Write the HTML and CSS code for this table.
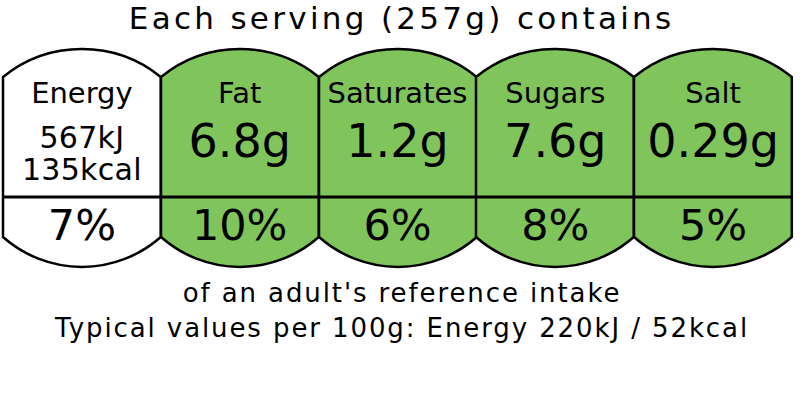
FILE: index.html
```html
<!DOCTYPE html>
<html lang="en">
<head>
<meta charset="utf-8">
<title>Nutrition label</title>
<link rel="stylesheet" href="styles.css">
</head>
<body>
<div class="label">
  <h1 class="title">Each serving (257g) contains</h1>
  <div class="row">
    <div class="cell energy">
      <svg class="shape" viewBox="0 0 157.8 224" preserveAspectRatio="none"><path class="outline" d="M0,30 A125.4,125.4 0 0 1 157.8,30 L157.8,190 A119,119 0 0 1 0,190 Z"/><path class="rule" d="M0,150 H157.8"/></svg>
      <div class="upper">
        <div class="name">Energy</div>
        <div class="sub first">567kJ</div>
        <div class="sub">135kcal</div>
      </div>
      <div class="lower">7%</div>
    </div>
    <div class="cell green">
      <svg class="shape" viewBox="0 0 157.8 224" preserveAspectRatio="none"><path class="outline" d="M0,30 A125.4,125.4 0 0 1 157.8,30 L157.8,190 A119,119 0 0 1 0,190 Z"/><path class="rule" d="M0,150 H157.8"/></svg>
      <div class="upper">
        <div class="name">Fat</div>
        <div class="value">6.8g</div>
      </div>
      <div class="lower">10%</div>
    </div>
    <div class="cell green">
      <svg class="shape" viewBox="0 0 157.8 224" preserveAspectRatio="none"><path class="outline" d="M0,30 A125.4,125.4 0 0 1 157.8,30 L157.8,190 A119,119 0 0 1 0,190 Z"/><path class="rule" d="M0,150 H157.8"/></svg>
      <div class="upper">
        <div class="name">Saturates</div>
        <div class="value">1.2g</div>
      </div>
      <div class="lower">6%</div>
    </div>
    <div class="cell green">
      <svg class="shape" viewBox="0 0 157.8 224" preserveAspectRatio="none"><path class="outline" d="M0,30 A125.4,125.4 0 0 1 157.8,30 L157.8,190 A119,119 0 0 1 0,190 Z"/><path class="rule" d="M0,150 H157.8"/></svg>
      <div class="upper">
        <div class="name">Sugars</div>
        <div class="value">7.6g</div>
      </div>
      <div class="lower">8%</div>
    </div>
    <div class="cell green">
      <svg class="shape" viewBox="0 0 157.8 224" preserveAspectRatio="none"><path class="outline" d="M0,30 A125.4,125.4 0 0 1 157.8,30 L157.8,190 A119,119 0 0 1 0,190 Z"/><path class="rule" d="M0,150 H157.8"/></svg>
      <div class="upper">
        <div class="name">Salt</div>
        <div class="value">0.29g</div>
      </div>
      <div class="lower">5%</div>
    </div>
  </div>
  <div class="note">
    <div class="line">of an adult's reference intake</div>
    <div class="line">Typical values per 100g: Energy 220kJ / 52kcal</div>
  </div>
</div>
</body>
</html>
```

FILE: styles.css
```css
html, body {
  margin: 0;
  padding: 0;
  background: #ffffff;
}

body {
  width: 800px;
  height: 400px;
  overflow: hidden;
  font-family: "DejaVu Sans", "Liberation Sans", sans-serif;
  color: #000000;
}

.title {
  margin: 0;
  font-size: 31px;
  font-weight: normal;
  line-height: 37px;
  letter-spacing: 3.3px;
  padding-left: 3.3px;
  text-align: center;
  white-space: nowrap;
}

.row {
  display: flex;
  margin-top: 10px;
  padding-left: 3px;
  height: 224px;
}

.cell {
  position: relative;
  z-index: 0;
  width: 157.8px;
  flex: 0 0 157.8px;
  text-align: center;
  white-space: nowrap;
}

.shape {
  position: absolute;
  top: 0;
  left: 0;
  width: 157.8px;
  height: 224px;
  overflow: visible;
  z-index: -1;
}

.outline {
  stroke: #000000;
  stroke-width: 2.5;
  stroke-linejoin: miter;
}

.rule {
  fill: none;
  stroke: #000000;
  stroke-width: 2.8;
}

.energy .outline {
  fill: #ffffff;
}

.green .outline {
  fill: #80c55c;
}

.upper {
  height: 150px;
  padding-top: 29px;
  box-sizing: border-box;
}

.name {
  font-size: 29px;
  line-height: 34px;
}

.value {
  margin-top: 4px;
  font-size: 46px;
  line-height: 54px;
}

.sub {
  font-size: 30px;
  line-height: 32px;
  letter-spacing: 0.3px;
}

.sub.first {
  margin-top: 12px;
}

.lower {
  padding-top: 6px;
  font-size: 43px;
  line-height: 44px;
}

.note {
  margin-top: 5px;
  text-align: center;
  font-size: 26px;
  line-height: 35px;
  letter-spacing: 1.9px;
  white-space: nowrap;
}

.line {
  padding-left: 4px;
}
```
